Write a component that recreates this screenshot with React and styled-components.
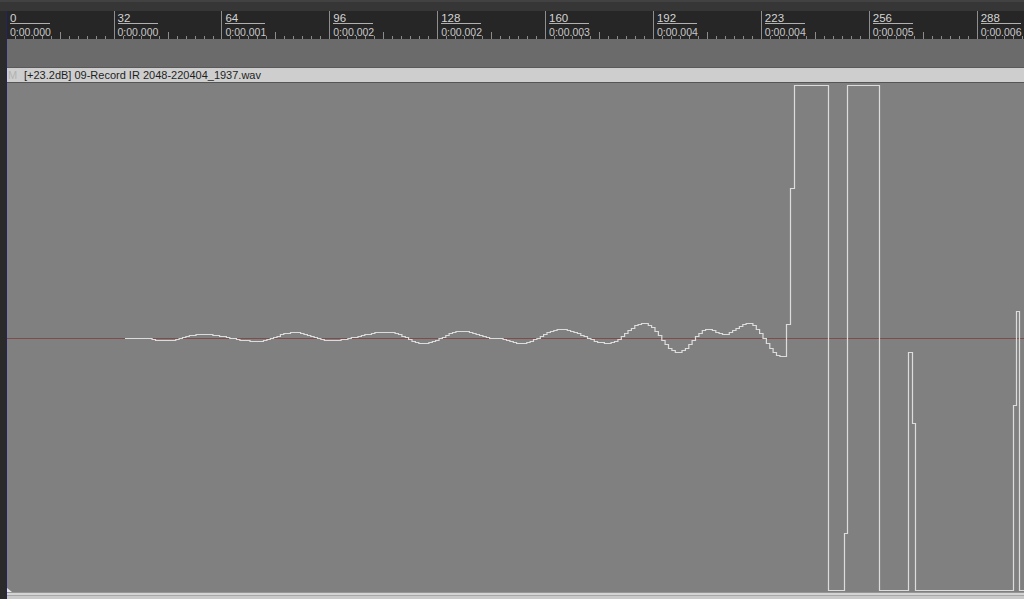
import React from "react";
import styled, { createGlobalStyle } from "styled-components";

const GlobalStyle = createGlobalStyle`
  html, body {
    margin: 0;
    padding: 0;
    background: #2a2a2a;
    overflow: hidden;
  }
  body {
    font-family: "Liberation Sans", Arial, sans-serif;
  }
`;

const Window = styled.div`
  width: 1024px;
  height: 599px;
  display: flex;
  flex-direction: column;
  background: #2a2a2a;
  overflow: hidden;
`;

const TopBar = styled.div`
  flex: none;
  height: 11px;
  box-sizing: border-box;
  background: #363636;
  border-top: 2px solid #424242;
`;

const Body = styled.div`
  flex: 1;
  display: flex;
  min-height: 0;
`;

const Gutter = styled.div`
  flex: none;
  width: 6px;
  background: #2a2a2a;
`;

const Content = styled.div`
  flex: 1;
  min-width: 0;
  display: flex;
  flex-direction: column;
  border-left: 1px solid #25255e;
`;

const Ruler = styled.div`
  flex: none;
  height: 28px;
  display: flex;
  background: #262626;
  overflow: hidden;
`;

const RulerSegment = styled.div`
  flex: none;
  width: ${(p) => p.$w}px;
  box-sizing: border-box;
  position: relative;
  padding: 2px 0 0 3px;
  border-left: ${(p) => (p.$first ? "none" : "1px solid #8e8e8e")};
  background: repeating-linear-gradient(
      to right,
      transparent 0 8px,
      #8c8c8c 8px 9px
    )
    left bottom / 100% 3px no-repeat;

  &::after {
    content: "";
    position: absolute;
    left: 53px;
    bottom: 0;
    width: 1px;
    height: 7px;
    background: #8c8c8c;
  }
`;

const BeatLabel = styled.div`
  width: 40px;
  font-size: 11.5px;
  line-height: 10px;
  color: #d4d4d4;
  border-bottom: 1px solid #b0b0b0;
  white-space: nowrap;
`;

const TimeLabel = styled.div`
  margin-top: 3px;
  font-size: 10.5px;
  line-height: 10px;
  color: #c8c8c8;
  white-space: nowrap;
`;

const Lane = styled.div`
  flex: none;
  height: 28px;
  background: #6b6b6b;
`;

const TrackHeader = styled.div`
  flex: none;
  height: 14px;
  display: flex;
  align-items: center;
  gap: 5px;
  padding-left: 1px;
  background: #cecece;
  border-top: 1px solid #5a5a5a;
  border-bottom: 1px solid #555555;
  font-size: 11px;
  color: #1e1e1e;
  white-space: nowrap;
`;

const MuteMark = styled.span`
  color: #b3b3b3;
  font-size: 11px;
  width: 11px;
`;

const WaveArea = styled.div`
  flex: 1;
  min-height: 0;
  background: #808080;
  svg {
    display: block;
  }
`;

const Footer = styled.div`
  flex: none;
  height: 7px;
  background: linear-gradient(
    to bottom,
    #969696 0 1px,
    #d4d4d4 1px 3px,
    #a6a6a6 3px 4px,
    #c9c9c9 4px 7px
  );
`;

const SEGMENTS = [
  ["0", "0:00.000"],
  ["32", "0:00.000"],
  ["64", "0:00.001"],
  ["96", "0:00.002"],
  ["128", "0:00.002"],
  ["160", "0:00.003"],
  ["192", "0:00.004"],
  ["223", "0:00.004"],
  ["256", "0:00.005"],
  ["288", "0:00.006"],
];

// peaks and troughs of the small ringing before the impulse
const KEYS = [
  [125, 338], [143, 338], [163, 340.5], [200, 334], [257, 341],
  [293, 332], [330, 340], [387, 331.5], [423, 343], [460, 331],
  [495, 338], [520, 343], [560, 329], [607, 343], [643, 323],
  [677, 352], [707, 329], [723, 334], [747, 323], [781, 356], [787, 356],
];

const level = (x) => {
  for (let k = 0; k < KEYS.length - 1; k++) {
    const [x0, y0] = KEYS[k];
    const [x1, y1] = KEYS[k + 1];
    if (x >= x0 && x <= x1) {
      const mu = (1 - Math.cos(((x - x0) / (x1 - x0)) * Math.PI)) / 2;
      return y0 + (y1 - y0) * mu;
    }
  }
  return 338;
};

const buildPath = () => {
  const step = 3.375;
  let d = `M125 ${Math.round(level(125)) + 0.5}`;
  for (let i = 0; ; i++) {
    const x = 7 + i * step;
    if (x <= 125) continue;
    if (x >= 786) break;
    const y = Math.round(level(x)) + 0.5;
    d += ` H${x.toFixed(1)} V${y}`;
  }
  d +=
    " H786.5 V324.5 H790.5 V188.5 H794.5 V85.5 H828.5 V590.5 H844.5 V533.5 H847.5" +
    " V85.5 H879.5 V590.5 H908.5 V352.5 H912.5 V423.5 H915.5 V590.5 H1013.5" +
    " V405.5 H1016.5 V311.5 H1019.5 V590.5 H1024";
  return d;
};

const WAVE = buildPath();

export default function App() {
  return (
    <Window>
      <GlobalStyle />
      <TopBar />
      <Body>
        <Gutter />
        <Content>
          <Ruler>
            {SEGMENTS.map(([beat, time], i) => (
              <RulerSegment key={beat} $first={i === 0} $w={i === 0 ? 106.5 : 107.9}>
                <BeatLabel>{beat}</BeatLabel>
                <TimeLabel>{time}</TimeLabel>
              </RulerSegment>
            ))}
          </Ruler>
          <Lane />
          <TrackHeader>
            <MuteMark>M</MuteMark>
            <span>[+23.2dB] 09-Record IR 2048-220404_1937.wav</span>
          </TrackHeader>
          <WaveArea>
            <svg width="1017" height="509" viewBox="7 83 1017 509">
              <line x1="7" x2="1024" y1="338.5" y2="338.5" stroke="#7e4c4c" strokeWidth="1" />
              <path d={WAVE} fill="none" stroke="#dcdcdc" strokeWidth="1.2" />
              <path d="M7 588 L12 592 L7 592 Z" fill="#e8e8e8" />
            </svg>
          </WaveArea>
          <Footer />
        </Content>
      </Body>
    </Window>
  );
}
